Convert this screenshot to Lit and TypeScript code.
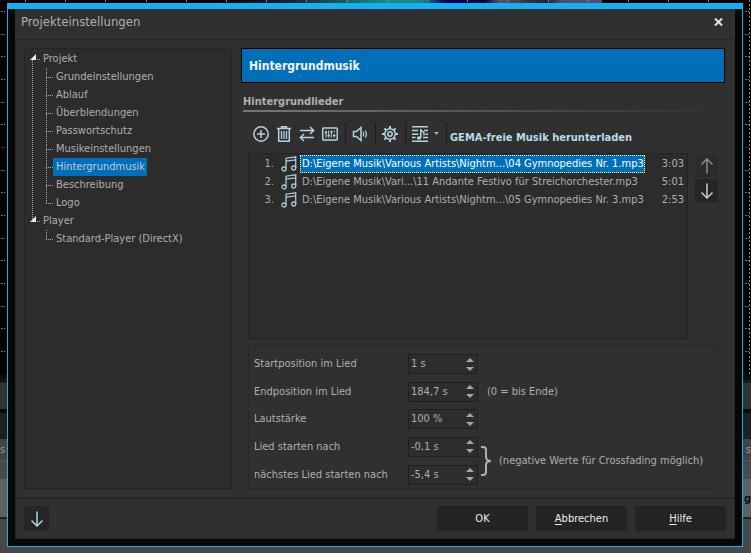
import { LitElement, html, svg, css } from "lit";
import { customElement, property, state } from "lit/decorators.js";
import { classMap } from "lit/directives/class-map.js";

interface Song {
  path: string;
  time: string;
}

const PROJECT_PAGES = [
  "Grundeinstellungen",
  "Ablauf",
  "Überblendungen",
  "Passwortschutz",
  "Musikeinstellungen",
  "Hintergrundmusik",
  "Beschreibung",
  "Logo",
];

const SONGS: Song[] = [
  { path: "D:\\Eigene Musik\\Various Artists\\Nightm...\\04 Gymnopedies Nr. 1.mp3", time: "3:03" },
  { path: "D:\\Eigene Musik\\Vari...\\11 Andante Festivo für Streichorchester.mp3", time: "5:01" },
  { path: "D:\\Eigene Musik\\Various Artists\\Nightm...\\05 Gymnopedies Nr. 3.mp3", time: "2:53" },
];

const ICONS: Record<string, unknown> = {
  add: svg`<circle cx="8" cy="8" r="7.2"/><path d="M8 4v8M4 8h8"/>`,
  trash: svg`<path d="M1 2.5h14M5.5 2.3V.8h5v1.5M2.7 3v12.2h10.6V3"/><path d="M5.5 5v8M8 5v8M10.5 5v8" stroke-width="1.3"/>`,
  swap: svg`<path d="M1 4.5h13.5M11 1l3.7 3.5L11 8M15 11.5H1.5M5 8l-3.7 3.5L5 15"/>`,
  mixer: svg`<rect x=".7" y="2" width="14.6" height="12" rx="1"/><path d="M4 4.5v7.2M6.7 4.5v7.2M9.4 4.5v7.2M12.2 4.5v1.8M12.2 8v3.5" stroke-width="1"/><path d="M2.8 6.6h2.4M5.5 9.4h2.4M8.2 6h2.4M11 9.4h2.4"/>`,
  speaker: svg`<path d="M1.500 5.500h3L9 1.500v13L4.500 10.500h-3z"/><path d="M11 5.7q1.4 2.3 0 4.6M13.2 4.500q2.400 3.500 0 7" stroke-width="1.2"/>`,
  gear: svg`<circle cx="8" cy="8" r="5.3"/><circle cx="8" cy="8" r="2.2"/><path d="M8 0v2.5M8 13.5V16M0 8h2.5M13.5 8H16M2.4 2.4l1.8 1.8M11.8 11.8l1.8 1.8M13.6 2.4l-1.8 1.8M4.2 11.8l-1.8 1.8" stroke-width="2"/>`,
  playlist: svg`<path d="M0 .8h16M0 4.600h6M12 4.600h4M0 8.200h6.500M13.500 8.200H16M0 11.600h3.500M11 11.600h5M0 15.200h16" stroke-width="1.5"/><path d="M8.800 12V3q.3 2.200 2.800 3.300 1 1.400.2 3.200" stroke-width="1.5"/><ellipse cx="7" cy="12" rx="2.200" ry="1.800" fill="currentColor" stroke="none"/>`,
  notes: svg`<circle cx="3" cy="13" r="2"/><circle cx="12.700" cy="12" r="2"/><path d="M5 13V2.200L14.700.8V12M5 5.200l9.700-1.400"/>`,
  up: svg`<path d="M8 15.500V1M2.500 6.500L8 1l5.500 5.500"/>`,
  down: svg`<path d="M8 .5V15M2.500 9.500L8 15l5.500-5.500"/>`,
};

const icon = (name: string) => html`<svg class="icon" viewBox="0 0 16 16" aria-hidden="true">${ICONS[name]}</svg>`;

/** The editor that lies behind the dialog: a dotted grid over the timeline. */
@customElement("editor-backdrop")
class EditorBackdrop extends LitElement {
  static styles = css`
    :host { display: flex; flex-direction: column; background: #000; color: #999; font: 11px "DejaVu Sans Condensed", sans-serif; overflow: hidden; }
    svg { display: block; width: 100%; height: 374px; flex: none; }
    .band { flex: none; display: flex; justify-content: space-between; align-items: center; }
    .fade { height: 9px; background: linear-gradient(#050505, #1c1c1c); }
    .bar { height: 26px; background: #333; }
    .gap { height: 4px; background: #080808; }
    .dark { height: 26px; background: #1f1f1f; }
    .ruler { height: 22px; background: #444; border-bottom: 1px solid #555; box-sizing: border-box; }
    .track { height: 18px; background: #4a4a4a; }
    .clip { height: 38px; background: #606060; border-bottom: 2px solid #222; color: #111; font-weight: bold; justify-content: flex-end; }
    .rest { flex: 1; background: #484848; }
  `;

  render() {
    const rows = Array.from({ length: 17 }, (_, i) => Math.round(11 + (i * 68) / 3));
    const cols = Array.from({ length: 19 }, (_, i) => Math.round(25 + i * 40.2));
    return html`
      <svg aria-hidden="true">
        <defs>
          <linearGradient id="photo">
            <stop offset="0" stop-color="#000"/><stop offset=".2" stop-color="#123"/>
            <stop offset=".44" stop-color="#1a8a80"/><stop offset=".54" stop-color="#1a8a80"/>
            <stop offset=".6" stop-color="#00005a"/>
            <stop offset=".7" stop-color="#04043a"/><stop offset=".74" stop-color="#555566"/>
            <stop offset=".86" stop-color="#22222c"/><stop offset=".9" stop-color="#4c5070"/>
            <stop offset="1" stop-color="#4c5070"/>
          </linearGradient>
        </defs>
        <rect x="210" width="392" height="3" fill="url(#photo)"/>
        ${rows.map((y) => svg`<line x1="1" x2="100%" y1=${y + 0.5} y2=${y + 0.5} stroke=${y === 147 ? "#c01818" : "#777"} stroke-dasharray="2 1 1 2"/>`)}
        ${cols.map((x) => svg`<line x1=${x + 0.5} x2=${x + 0.5} y1="0" y2="374" stroke="#888" stroke-dasharray="2 2"/>`)}
      </svg>
      <div class="band fade"></div>
      <div class="band bar"></div>
      <div class="band gap"></div>
      <div class="band dark"></div>
      <div class="band ruler"><span>s</span><span>s</span></div>
      <div class="band track"></div>
      <div class="band clip"><span>g</span></div>
      <div class="band rest"></div>
    `;
  }
}

@customElement("spin-field")
class SpinField extends LitElement {
  @property() label = "";
  @property() value = "";

  static styles = css`
    :host { display: flex; align-items: center; height: 20px; }
    label { width: 154px; }
    .box { display: flex; box-sizing: border-box; width: 70px; height: 20px; border: 1px solid #1f1f1f; background: #2d2d2d; }
    input { flex: 1; min-width: 0; border: 0; padding: 0 0 0 2px; background: none; color: inherit; font: inherit; outline: none; }
    .arrows { display: flex; flex-direction: column; justify-content: center; gap: 1px; width: 15px; }
    button { border: 0; padding: 0; height: 8px; background: none; color: #a6a6a6; display: flex; align-items: center; justify-content: center; }
    svg { display: block; width: 8px; height: 4px; fill: currentColor; }
  `;

  render() {
    return html`
      <label for="value">${this.label}</label>
      <div class="box">
        <input id="value" type="text" .value=${this.value} />
        <div class="arrows">
          <button aria-label="Mehr"><svg viewBox="0 0 8 4"><path d="M0 4L4 0l4 4z"/></svg></button>
          <button aria-label="Weniger"><svg viewBox="0 0 8 4"><path d="M0 0h8L4 4z"/></svg></button>
        </div>
      </div>
    `;
  }
}

@customElement("app-root")
class AppRoot extends LitElement {
  @state() private page = "Hintergrundmusik";
  @state() private selected = 0;

  static styles = css`
    :host { display: flex; position: relative; box-sizing: border-box; min-height: 100vh; padding: 3px 8px 6px 7px; color: #b0afad; font: 11px/18px "DejaVu Sans Condensed", "DejaVu Sans", sans-serif; font-stretch: condensed; }
    editor-backdrop { position: absolute; inset: 0; }
    button { font: inherit; color: inherit; border: 0; padding: 0; background: none; }
    ul { list-style: none; margin: 0; padding: 0; }
    .icon { display: block; width: 16px; height: 16px; fill: none; stroke: currentColor; stroke-width: 1.5; }

    .frame { position: relative; flex: 1; display: flex; border: 1px solid #15aff5; border-top-width: 6px; padding: 0 7px 7px; background: #070707; }
    .dialog { flex: 1; min-width: 0; display: flex; flex-direction: column; background: #303030; }
    .titlebar { display: flex; justify-content: space-between; height: 30px; padding: 0 12px 0 6px; }
    .titlebar h1 { margin: 0; font-size: 13px; font-weight: normal; line-height: 26px; }
    .close { display: flex; align-items: center; height: 26px; color: #e4e4e4; }
    .close svg { width: 9px; height: 8px; stroke: currentColor; stroke-width: 2; }

    .body { flex: 1; display: flex; gap: 9px; padding: 8px 9px 8px 8px; border: 1px solid #272727; border-bottom: 0; }
    .tree { box-sizing: border-box; width: 208px; padding-top: 1px; border: 1px solid #252525; background: #2c2c2c; }
    .branch { background: repeating-linear-gradient(#aaa 0 1px, transparent 1px 2px) 7px 100% / 1px calc(100% - 8px) no-repeat; }
    .branch:last-child { background-position: 7px 0; background-size: 1px 8px; }
    .node { display: flex; align-items: center; height: 18px; padding-left: 5px; }
    .node svg { width: 6px; height: 6px; fill: #eee; margin-bottom: 4px; }
    .node::after { content: ""; order: 1; width: 4px; height: 1px; margin: 0 2px 0 1px; background: repeating-linear-gradient(90deg, #aaa 0 1px, transparent 1px 2px); }
    .node span { order: 2; }
    .leaves { margin-left: 21px; background: repeating-linear-gradient(#aaa 0 1px, transparent 1px 2px) 0 0 / 1px calc(100% - 9px) no-repeat; }
    .leaves li { display: flex; align-items: center; height: 18px; }
    .leaves li::before { content: ""; width: 7px; height: 1px; background: repeating-linear-gradient(90deg, #aaa 0 1px, transparent 1px 2px); }
    .leaf { height: 18px; padding: 0 2px 0 3px; }
    .leaf.current { background: #006fb9; color: #c3ccd2; }

    .page { flex: 1; min-width: 0; display: flex; flex-direction: column; }
    .banner { margin: 0; box-sizing: border-box; height: 35px; padding-left: 7px; border: 1px solid #000; background: #006fb7; color: #f4f4f4; font-size: 12px; line-height: 34px; font-weight: bold; }
    .caption { margin: 0; padding: 10px 0 0 2px; font-size: 11px; line-height: 18px; height: 17px; font-weight: bold; }
    .rule { height: 2px; margin-left: 2px; background: linear-gradient(90deg, #777, #303030 98%); }
    .toolbar { display: flex; align-items: center; height: 41px; padding: 2px 0 0 12px; box-sizing: border-box; color: #b4d3df; }
    .toolbar .tools { display: flex; align-items: center; gap: 7px; }
    .toolbar .sep { width: 1px; height: 22px; margin: 0 6px 0 7px; background: #1c1c1c; }
    .toolbar .drop { display: flex; margin-left: 6px; color: #aaa; }
    .toolbar .drop svg { width: 5px; height: 3px; fill: currentColor; }
    .toolbar a { align-self: flex-end; margin: 0 0 8px -3px; color: #b9dce8; font-weight: bold; line-height: 14px; text-decoration: none; }

    .content { flex: 1; display: flex; flex-direction: column; gap: 6px; padding: 0 7px; }
    .songs { flex: 1; display: flex; gap: 7px; }
    .list { flex: 1; padding-top: 1px; border: 1px solid #232323; background: #2c2c2c; }
    table { width: 100%; border-collapse: collapse; }
    td { padding: 0; height: 18px; line-height: 16px; white-space: nowrap; }
    .num { width: 25px; text-align: right; }
    .note { width: 26px; color: #a9c8d4; }
    .note .icon { margin-left: 7px; stroke-width: 1.3; }
    .path { display: inline-block; border: 1px solid transparent; padding-left: 1px; }
    .selected .path { background: #006fb9; border: 1px dotted #fff; color: #fff; }
    .time { text-align: right; padding-right: 3px; }
    .order { display: flex; flex-direction: column; gap: 2px; padding-top: 1px; }
    .order button, .more { display: flex; align-items: center; justify-content: center; width: 23px; height: 23px; background: #252525; color: #b4d3df; }
    .order button:disabled { background: #2b2b2b; color: #8b8b8b; }

    .options { box-sizing: border-box; height: 144px; display: flex; flex-direction: column; justify-content: space-between; padding: 8px 5px 3px; border: 1px solid #282828; }
    .line { display: flex; align-items: center; gap: 9px; }
    .pair { display: flex; align-items: center; }
    .pair .fields { display: flex; flex-direction: column; gap: 8px; }
    .brace { width: 12px; height: 30px; margin: 0 7px 0 2px; fill: none; stroke: #b0afad; stroke-width: 2; }

    .footer { display: flex; align-items: center; gap: 8px; height: 39px; border: 1px solid #272727; border-top-width: 2px; padding: 0 8px; }
    .footer .more { width: 25px; height: 25px; margin-right: auto; }
    .action { width: 91px; height: 25px; background: #242424; color: #ececec; }
    u { text-underline-offset: 2px; }
  `;

  private leaves(names: string[]) {
    return html`<ul class="leaves">
      ${names.map((n) => html`<li>
        <button class=${classMap({ leaf: true, current: n === this.page })} @click=${() => (this.page = n)}>${n}</button>
      </li>`)}
    </ul>`;
  }

  private branch(name: string, names: string[]) {
    return html`<li class="branch">
      <div class="node"><svg viewBox="0 0 6 6"><path d="M6 0v6H0z"/></svg><span>${name}</span></div>
      ${this.leaves(names)}
    </li>`;
  }

  private tool(name: string, label: string) {
    return html`<button aria-label=${label}>${icon(name)}</button>`;
  }

  render() {
    return html`
      <editor-backdrop></editor-backdrop>
      <div class="frame"><main class="dialog">
        <header class="titlebar">
          <h1>Projekteinstellungen</h1>
          <button class="close" aria-label="Schließen"><svg viewBox="0 0 9 8"><path d="M1 0.500L8 7.500M8 0.500L1 7.500"/></svg></button>
        </header>
        <div class="body">
          <nav class="tree"><ul>
            ${this.branch("Projekt", PROJECT_PAGES)}
            ${this.branch("Player", ["Standard-Player (DirectX)"])}
          </ul></nav>
          <section class="page">
            <h2 class="banner">Hintergrundmusik</h2>
            <h3 class="caption">Hintergrundlieder</h3>
            <div class="rule"></div>
            <div class="toolbar">
              <div class="tools">
                ${this.tool("add", "Hinzufügen")}${this.tool("trash", "Entfernen")}${this.tool("swap", "Ersetzen")}${this.tool("mixer", "Mixer")}
              </div>
              <span class="sep"></span>${this.tool("speaker", "Anhören")}
              <span class="sep"></span>${this.tool("gear", "Einstellungen")}
              <span class="sep"></span>${this.tool("playlist", "Wiedergabeliste")}
              <button class="drop" aria-label="Mehr"><svg viewBox="0 0 5 3"><path d="M0 0h5L2.500 3z"/></svg></button>
              <span class="sep"></span>
              <a href="#">GEMA-freie Musik herunterladen</a>
            </div>
            <div class="content">
              <div class="songs">
                <div class="list"><table>
                  ${SONGS.map((s, i) => html`<tr class=${classMap({ selected: i === this.selected })} @click=${() => (this.selected = i)}>
                    <td class="num">${i + 1}.</td>
                    <td class="note">${icon("notes")}</td>
                    <td><span class="path">${s.path}</span></td>
                    <td class="time">${s.time}</td>
                  </tr>`)}
                </table></div>
                <div class="order">
                  <button aria-label="Nach oben" disabled>${icon("up")}</button>
                  <button aria-label="Nach unten">${icon("down")}</button>
                </div>
              </div>
              <div class="options">
                <spin-field label="Startposition im Lied" value="1 s"></spin-field>
                <div class="line"><spin-field label="Endposition im Lied" value="184,7 s"></spin-field><span>(0 = bis Ende)</span></div>
                <spin-field label="Lautstärke" value="100 %"></spin-field>
                <div class="pair">
                  <div class="fields">
                    <spin-field label="Lied starten nach" value="-0,1 s"></spin-field>
                    <spin-field label="nächstes Lied starten nach" value="-5,4 s"></spin-field>
                  </div>
                  <svg class="brace" viewBox="0 0 12 30"><path d="M1 1h2q3 0 3 3v7q0 4 5 4q-5 0-5 4v7q0 3-3 3h-2"/></svg>
                  <span>(negative Werte für Crossfading möglich)</span>
                </div>
              </div>
            </div>
          </section>
        </div>
        <footer class="footer">
          <button class="more" aria-label="Weitere Optionen">${icon("down")}</button>
          <button class="action">OK</button>
          <button class="action"><u>A</u>bbrechen</button>
          <button class="action"><u>H</u>ilfe</button>
        </footer>
      </main></div>
    `;
  }
}
